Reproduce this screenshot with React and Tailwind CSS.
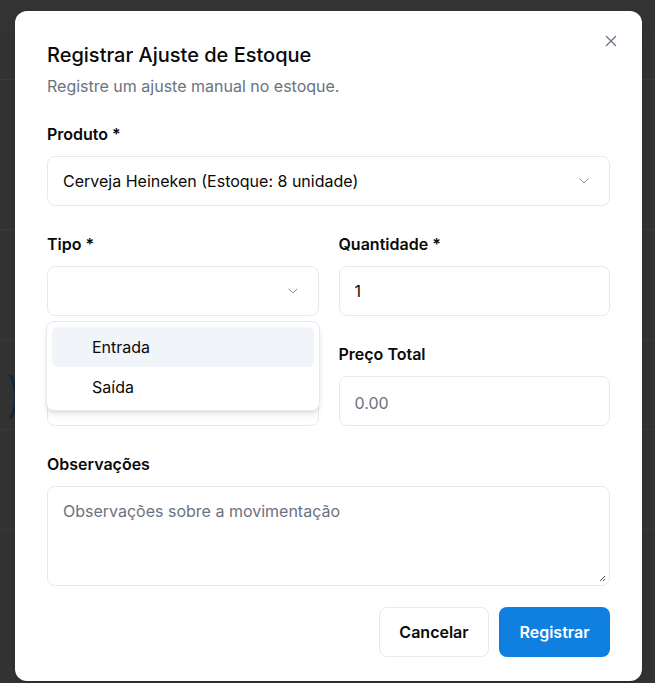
import { useState } from "react";
import { ChevronDown, X } from "lucide-react";

const font = { fontFamily: "Inter, 'Noto Sans', sans-serif" };

const Label = ({ children }) => (
  <label className="block text-base leading-6 font-semibold text-[#0a0a0a] mb-[10px]">
    {children}
  </label>
);

const SelectBox = ({ value }) => (
  <div className="h-[50px] w-full rounded-lg border border-[#e6eaf0] bg-white flex items-center justify-between pl-[15px] pr-[17px]">
    <span className="text-base text-[#0a0a0a]">{value}</span>
    <ChevronDown size={16} strokeWidth={1.5} className="text-[#8a8f98]" />
  </div>
);

const Input = ({ value, placeholder }) => (
  <div className="h-[50px] w-full rounded-lg border border-[#e6eaf0] bg-white flex items-center px-[15px]">
    {value ? (
      <span className="text-base text-[#0a0a0a]">{value}</span>
    ) : (
      <span className="text-base text-[#6b7280] pt-[3px]">{placeholder}</span>
    )}
  </div>
);

export default function App() {
  const [tipo] = useState("");

  return (
    <div className="relative h-[683px] w-full overflow-hidden bg-[#333333]" style={font}>
      {/* page behind the overlay */}
      <div className="flex flex-col">
        <div className="h-[80px] border-b border-[#3b3b3b]"></div>
        <div className="h-[150px] border-b border-[#3b3b3b]"></div>
        <div className="h-[110px] border-b border-[#3a3a3a]"></div>
        <div className="h-[90px] border-b border-[#3a3a3a] flex items-center pl-[6px] pt-[20px]">
          <span className="text-[#16263c] text-5xl font-light">)</span>
        </div>
        <div className="h-[100px] border-b border-[#3a3a3a]"></div>
      </div>

      {/* dialog */}
      <div className="absolute left-[15px] top-[11px] w-[627px] rounded-xl bg-white shadow-lg pt-[30px] pb-[24px] px-[32px]">
        <button className="absolute right-[22px] top-[21px] text-[#6b7280]">
          <X size={18} strokeWidth={1.75} />
        </button>

        <h2 className="text-xl leading-7 font-medium text-[#0a0a0a]">
          Registrar Ajuste de Estoque
        </h2>
        <p className="mt-[5px] text-base leading-6 text-[#6b7280]">
          Registre um ajuste manual no estoque.
        </p>

        <div className="mt-[24px]">
          <Label>Produto *</Label>
          <SelectBox value="Cerveja Heineken (Estoque: 8 unidade)" />
        </div>

        <div className="mt-[26px] grid grid-cols-2 gap-x-[20px] gap-y-[26px]">
          <div>
            <Label>Tipo *</Label>
            <SelectBox value={tipo} />
          </div>
          <div>
            <Label>Quantidade *</Label>
            <Input value="1" />
          </div>
          <div>
            <Label>Preço Unitário</Label>
            <Input placeholder="0.00" />
          </div>
          <div>
            <Label>Preço Total</Label>
            <Input placeholder="0.00" />
          </div>
        </div>

        <div className="mt-[26px]">
          <Label>Observações</Label>
          <div className="relative h-[100px] w-full rounded-lg border border-[#e6eaf0] bg-white px-[15px] py-[12px]">
            <span className="text-base text-[#6b7280]">Observações sobre a movimentação</span>
            <svg className="absolute right-[3px] bottom-[3px]" width="8" height="8" viewBox="0 0 8 8">
              <path d="M7 2 L2 7 M7 5 L5 7" stroke="#555" strokeWidth="1" />
            </svg>
          </div>
        </div>

        <div className="mt-[21px] flex justify-end gap-[10px]">
          <button className="h-[50px] w-[110px] rounded-lg border border-[#e6eaf0] bg-white text-base font-semibold text-[#0a0a0a]">
            Cancelar
          </button>
          <button className="h-[50px] w-[111px] rounded-lg bg-[#0f80e0] text-base font-semibold text-white">
            Registrar
          </button>
        </div>

        {/* open select menu */}
        <div className="absolute left-[31px] top-[310px] w-[274px] rounded-lg border border-[#e6eaf0] bg-white px-[5px] pt-[5px] pb-[3px] shadow-md">
          <div className="h-10 rounded-md bg-[#f1f4f9] flex items-center pl-10 text-base text-[#0a0a0a]">
            Entrada
          </div>
          <div className="h-10 rounded-md flex items-center pl-10 text-base text-[#0a0a0a]">
            Saída
          </div>
        </div>
      </div>
    </div>
  );
}
